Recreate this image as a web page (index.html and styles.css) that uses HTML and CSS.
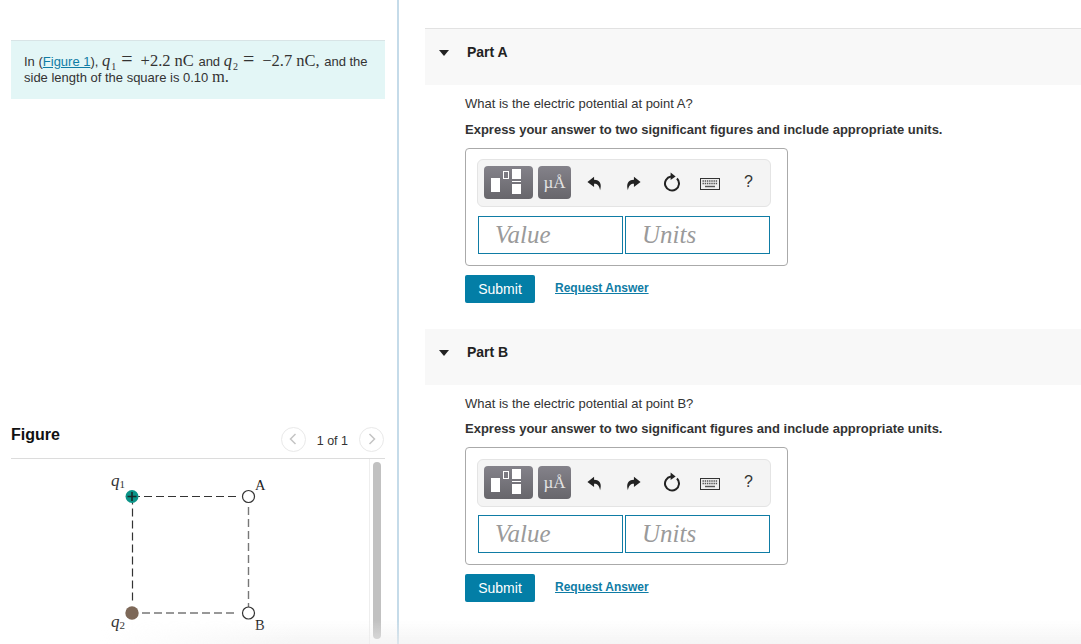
FILE: index.html
```html
<!DOCTYPE html>
<html lang="en">

<head>
  <meta charset="UTF-8">
  <title>Electric potential</title>
  <link rel="stylesheet" href="styles.css">
</head>

<body>
  <svg class="icon-defs" width="0" height="0">
    <defs>
      <symbol id="undo" viewBox="0 0 14 14">
        <path d="M6.6 0.6 L0.4 5.5 L6.6 10.2 L6.6 7.3 C9.4 7.2 11.4 8.8 12.2 13.2 C14 7.8 12.2 3.6 6.6 3.5 Z" />
      </symbol>
      <symbol id="redo" viewBox="0 0 14 14">
        <path d="M7.4 0.6 L13.6 5.5 L7.4 10.2 L7.4 7.3 C4.6 7.2 2.6 8.8 1.8 13.2 C0 7.8 1.8 3.6 7.4 3.5 Z" />
      </symbol>
      <symbol id="reset" viewBox="0 0 18 20">
        <path d="M13.95 6.55 A7 7 0 1 1 8 4.57" class="reset-ring" />
        <path d="M7.6 0.4 L12.6 4.4 L7.6 8 Z" />
      </symbol>
      <symbol id="keyboard" viewBox="0 0 20 12">
        <rect x="0.5" y="0.5" width="19" height="11" class="key-box" />
        <path d="M2.5 3h15 M2.5 5.5h15" class="key-rows" />
        <path d="M5 8.5h10" class="key-space" />
      </symbol>
    </defs>
  </svg>

  <div class="page">
    <aside class="left-pane">
      <div class="stimulus">
        In (<a href="#" class="figure-link">Figure 1</a>), <span class="math"><i>q</i><sub>1</sub><span class="rel">=</span>+2.2<span class="unit">nC</span></span> and <span class="math"><i>q</i><sub>2</sub><span class="rel">=</span>&minus;2.7<span class="unit">nC,</span></span> and the<br>
        side length of the square is 0.10 <span class="math">m.</span>
      </div>

      <div class="figure-head">
        <h2>Figure</h2>
        <div class="pager">
          <span class="pager-btn">
            <svg width="8" height="12" viewBox="0 0 8 12"><path d="M6.5 1 L1.5 6 L6.5 11" class="chevron" /></svg>
          </span>
          <span class="pager-text">1 of 1</span>
          <span class="pager-btn">
            <svg width="8" height="12" viewBox="0 0 8 12"><path d="M1.5 1 L6.5 6 L1.5 11" class="chevron" /></svg>
          </span>
        </div>
      </div>

      <div class="figure-body">
        <svg class="diagram" width="358" height="185" viewBox="0 0 358 185">
          <path d="M121 37.5 H226" class="dash" />
          <path d="M121.5 37.5 V142" class="dash" />
          <path d="M237.5 48 V154" class="dash light" />
          <path d="M131 154 H226" class="dash light" />
          <circle cx="121" cy="37.5" r="6.5" fill="#0b9488" />
          <path d="M116.5 37.5 h9 M121 33 v9" class="plus" />
          <circle cx="121" cy="154" r="6.7" fill="#7d6858" />
          <circle cx="237.5" cy="37.5" r="6" class="point" />
          <circle cx="237.5" cy="154" r="6" class="point" />
          <text x="100" y="27" class="label-q">q<tspan class="label-sub" dy="2">1</tspan></text>
          <text x="100" y="168" class="label-q">q<tspan class="label-sub" dy="2">2</tspan></text>
          <text x="244" y="31" class="label-pt">A</text>
          <text x="244" y="171" class="label-pt">B</text>
        </svg>
        <div class="scroll-track"><div class="scroll-thumb"></div></div>
      </div>
    </aside>

    <main class="right-pane">
      <section class="part">
        <header class="part-head"><span class="caret"></span><h3>Part A</h3></header>
        <div class="part-body">
          <p class="question">What is the electric potential at point A?</p>
          <p class="instruction">Express your answer to two significant figures and include appropriate units.</p>
          <div class="answer-box">
            <div class="toolbar">
              <button class="tool tool-frac" type="button">
                <span class="frac-big"></span><span class="frac-small"></span>
                <span class="frac-stack"><span></span><span></span><span></span></span>
              </button>
              <button class="tool tool-unit" type="button">&micro;&Aring;</button>
              <svg class="tb-icon undo"><use href="#undo" /></svg>
              <svg class="tb-icon redo"><use href="#redo" /></svg>
              <svg class="tb-icon reset"><use href="#reset" /></svg>
              <svg class="tb-icon keyboard"><use href="#keyboard" /></svg>
              <span class="tb-help">?</span>
            </div>
            <div class="inputs">
              <div class="field">Value</div>
              <div class="field">Units</div>
            </div>
          </div>
          <div class="actions">
            <button class="submit" type="button">Submit</button>
            <a href="#" class="request">Request Answer</a>
          </div>
        </div>
      </section>

      <section class="part part-b">
        <header class="part-head"><span class="caret"></span><h3>Part B</h3></header>
        <div class="part-body">
          <p class="question">What is the electric potential at point B?</p>
          <p class="instruction">Express your answer to two significant figures and include appropriate units.</p>
          <div class="answer-box">
            <div class="toolbar">
              <button class="tool tool-frac" type="button">
                <span class="frac-big"></span><span class="frac-small"></span>
                <span class="frac-stack"><span></span><span></span><span></span></span>
              </button>
              <button class="tool tool-unit" type="button">&micro;&Aring;</button>
              <svg class="tb-icon undo"><use href="#undo" /></svg>
              <svg class="tb-icon redo"><use href="#redo" /></svg>
              <svg class="tb-icon reset"><use href="#reset" /></svg>
              <svg class="tb-icon keyboard"><use href="#keyboard" /></svg>
              <span class="tb-help">?</span>
            </div>
            <div class="inputs">
              <div class="field">Value</div>
              <div class="field">Units</div>
            </div>
          </div>
          <div class="actions">
            <button class="submit" type="button">Submit</button>
            <a href="#" class="request">Request Answer</a>
          </div>
        </div>
      </section>
    </main>
  </div>
  <div class="bottom-fade"></div>
</body>

</html>
```

FILE: styles.css
```css
html,
body {
  margin: 0;
  padding: 0;
  height: 100%;
  overflow: hidden;
}

body {
  font-family: "Liberation Sans", Arial, sans-serif;
  font-size: 13px;
  color: #222;
  background: #fff;
}

.icon-defs {
  display: block;
  height: 0;
}

.page {
  display: flex;
  height: 644px;
}

/* left column */
.left-pane {
  box-sizing: border-box;
  width: 399px;
  padding: 40px 12px 0 11px;
  border-right: 2px solid #c5dbe9;
}

.stimulus {
  box-sizing: border-box;
  height: 59px;
  padding: 13px 13px 0;
  background: #e3f6f6;
  border-top: 1px solid #d8e4e6;
  line-height: 16px;
  font-size: 13px;
  color: #333;
}

.figure-link {
  color: #0f7ca5;
}

.math {
  font-family: "Liberation Serif", serif;
  font-size: 16.5px;
  line-height: 0;
}

.math sub {
  margin-left: 1px;
  font-size: 10px;
  line-height: 0;
}

.math .rel {
  margin: 0 8px 0 5px;
  font-size: 20px;
}

.math .unit {
  margin: 0 1px 0 4px;
}

.figure-head {
  display: flex;
  align-items: center;
  justify-content: space-between;
  height: 47px;
  margin-top: 313px;
  border-bottom: 1px solid #dcdcdc;
  box-sizing: border-box;
  padding-top: 8px;
}

.figure-head h2 {
  margin: 0 0 9px;
  font-size: 16px;
  color: #111;
}

.pager {
  display: flex;
  align-items: center;
  gap: 11px;
  margin-right: 1px;
}

.pager-btn {
  box-sizing: border-box;
  display: flex;
  align-items: center;
  justify-content: center;
  width: 25px;
  height: 25px;
  border: 1px solid #e9e9e9;
  border-radius: 50%;
}

.chevron {
  fill: none;
  stroke: #c4c4c4;
  stroke-width: 1.5;
}

.pager-text {
  padding-top: 3px;
  font-size: 12.5px;
  color: #333;
}

.figure-body {
  display: flex;
  justify-content: space-between;
  height: 186px;
}

.dash {
  stroke: #333;
  stroke-width: 1.2;
  stroke-dasharray: 8 4;
  fill: none;
}

.dash.light {
  stroke: #777;
  stroke-width: 1.4;
}

.plus {
  stroke: #1a2a2a;
  stroke-width: 1.6;
}

.point {
  fill: #fff;
  stroke: #333;
  stroke-width: 1.2;
}

.label-q {
  font-family: "Liberation Serif", serif;
  font-style: italic;
  font-size: 17px;
  fill: #333;
}

.label-sub {
  font-size: 11px;
  font-style: normal;
}

.label-pt {
  font-family: "Liberation Serif", serif;
  font-size: 14.5px;
  fill: #222;
}

.scroll-track {
  box-sizing: border-box;
  width: 16px;
  padding: 3px 4px 6px 3px;
  border-left: 1px solid #eee;
}

.scroll-thumb {
  width: 8px;
  height: 100%;
  border-radius: 4px;
  background: #c1c1c1;
}

/* right column */
.right-pane {
  flex: 1;
  padding: 28px 0 0 26px;
}

.part-b {
  margin-top: 26px;
}

.part-head {
  display: flex;
  align-items: flex-start;
  box-sizing: border-box;
  height: 57px;
  padding: 16px 0 0 14px;
  background: #f8f8f8;
  border-top: 1px solid #e2e2e2;
}

.part-b .part-head {
  height: 56px;
  border-top: 0;
}

.part-head h3 {
  margin: 0 0 0 18px;
  font-size: 14px;
  line-height: 15px;
  color: #222;
}

.caret {
  width: 0;
  height: 0;
  margin-top: 5px;
  border-left: 5px solid transparent;
  border-right: 5px solid transparent;
  border-top: 6px solid #222;
}

.part-body {
  padding-left: 40px;
}

.question {
  margin: 0;
  padding-top: 11px;
  font-size: 13px;
  line-height: 16px;
  color: #333;
}

.instruction {
  margin: 10px 0 0;
  font-size: 13px;
  line-height: 16px;
  font-weight: bold;
  color: #333;
}

.part-b .instruction {
  margin-top: 9px;
}

.answer-box {
  box-sizing: border-box;
  width: 323px;
  height: 118px;
  margin-top: 10px;
  padding: 10px 11px;
  border: 1px solid #aaa;
  border-radius: 4px;
}

.part-b .answer-box {
  padding-top: 11px;
}

.toolbar {
  box-sizing: border-box;
  display: flex;
  align-items: center;
  width: 294px;
  height: 48px;
  padding-left: 6px;
  background: #f4f4f4;
  border: 1px solid #e4e4e4;
  border-radius: 6px;
}

.tool {
  height: 33px;
  margin-bottom: 2px;
  padding: 0;
  border: 0;
  border-radius: 4px;
  background: linear-gradient(#84828a, #67666b);
  color: #e4e4e4;
  position: relative;
}

.tool-frac {
  width: 49px;
  margin-right: 5px;
}

.tool-unit {
  width: 33px;
  font-family: "Liberation Serif", serif;
  font-size: 17px;
  line-height: 33px;
}

.frac-big {
  position: absolute;
  left: 7px;
  top: 12px;
  width: 9px;
  height: 14px;
  background: #fff;
}

.frac-small {
  position: absolute;
  left: 19px;
  top: 5px;
  width: 4px;
  height: 6px;
  border: 1px solid #fff;
}

.frac-stack {
  position: absolute;
  left: 28px;
  top: 3px;
  display: flex;
  flex-direction: column;
  gap: 2px;
  width: 9px;
}

.frac-stack span {
  display: block;
  height: 10px;
  background: #fff;
}

.frac-stack span:nth-child(2) {
  height: 1px;
}

.tb-icon {
  display: block;
  fill: #222;
}

.undo,
.redo {
  width: 15px;
  height: 15px;
}

.undo {
  margin-left: 16px;
}

.redo {
  margin-left: 24px;
}

.reset {
  width: 18px;
  height: 20px;
  margin-left: 22px;
  margin-bottom: 2px;
}

.reset-ring {
  fill: none;
  stroke: #222;
  stroke-width: 2;
}

.keyboard {
  width: 20px;
  height: 12px;
  margin-left: 19px;
  margin-top: 2px;
}

.key-box {
  fill: #eee;
  stroke: #333;
}

.key-rows {
  stroke: #555;
  stroke-width: 1.4;
  stroke-dasharray: 1.4 0.8;
  fill: none;
}

.key-space {
  stroke: #555;
  stroke-width: 1.4;
  fill: none;
}

.tb-help {
  margin-left: 24px;
  margin-bottom: 2px;
  font-size: 16px;
  color: #333;
}

.inputs {
  display: flex;
  gap: 2px;
  margin-top: 9px;
  margin-left: 1px;
}

.part-b .inputs {
  margin-top: 8px;
}

.field {
  box-sizing: border-box;
  width: 145px;
  height: 38px;
  padding-left: 16px;
  border: 1px solid #0f7ca5;
  font-family: "Liberation Serif", serif;
  font-style: italic;
  font-size: 25px;
  line-height: 35px;
  color: #9a9a9a;
}

.actions {
  display: flex;
  align-items: flex-start;
  margin-top: 9px;
}

.submit {
  width: 70px;
  height: 28px;
  padding: 0;
  border: 0;
  border-radius: 2px;
  background: #037ea6;
  color: #fff;
  font-family: "Liberation Sans", Arial, sans-serif;
  font-size: 14px;
}

.request {
  margin: 6px 0 0 20px;
  font-size: 12px;
  font-weight: bold;
  color: #0f7ca5;
}

.bottom-fade {
  position: absolute;
  left: 0;
  right: 0;
  bottom: 0;
  height: 24px;
  background: linear-gradient(rgba(238, 238, 238, 0), rgba(238, 238, 238, 0.6));
  -webkit-mask-image: linear-gradient(to right, transparent 100px, black 300px);
  mask-image: linear-gradient(to right, transparent 100px, black 300px);
  pointer-events: none;
}
```
